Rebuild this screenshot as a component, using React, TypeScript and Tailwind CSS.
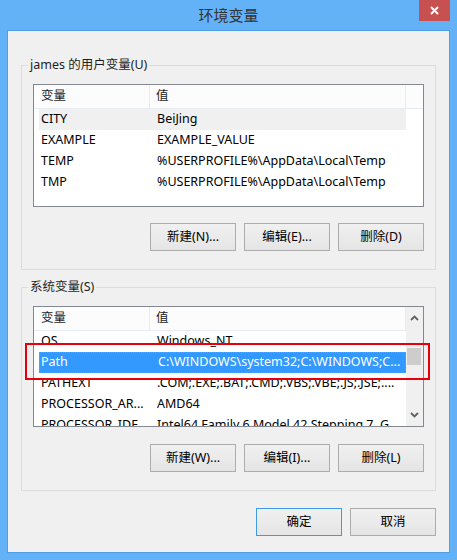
import React from 'react'

type Row = [string, string]

const USER_ROWS: Row[] = [
  ['CITY', 'BeiJing'],
  ['EXAMPLE', 'EXAMPLE_VALUE'],
  ['TEMP', '%USERPROFILE%\\AppData\\Local\\Temp'],
  ['TMP', '%USERPROFILE%\\AppData\\Local\\Temp'],
]

const SYS_ROWS: Row[] = [
  ['OS', 'Windows_NT'],
  ['Path', 'C:\\WINDOWS\\system32;C:\\WINDOWS;C...'],
  ['PATHEXT', '.COM;.EXE;.BAT;.CMD;.VBS;.VBE;.JS;.JSE;....'],
  ['PROCESSOR_AR...', 'AMD64'],
  ['PROCESSOR_IDE...', 'Intel64 Family 6 Model 42 Stepping 7, G...'],
]

function Button({ label, focused }: { label: string; focused?: boolean }) {
  return (
    <div
      className={`w-[86px] h-[28px] flex items-center justify-center border text-[12.5px] text-black bg-gradient-to-b from-[#f0f0f0] to-[#e5e5e5] ${
        focused ? 'border-[#3c9ae8]' : 'border-[#acacac]'
      }`}
    >
      {label}
    </div>
  )
}

function ListBox({
  rows,
  height,
  hoverRow,
  selectedRow,
  scroll,
}: {
  rows: Row[]
  height: string
  hoverRow?: number
  selectedRow?: number
  scroll?: boolean
}) {
  return (
    <div className={`${height} border border-[#828790] bg-white flex overflow-hidden`}>
      <div className="flex-1 flex flex-col min-w-0">
        {/* header */}
        <div className="h-[24px] flex shrink-0 border-b border-[#e5ecf3] bg-[#fcfcfc] text-[12.5px] text-[#1e1e1e]">
          <div className="w-[116px] pl-[7px] flex items-center border-r border-[#e5ecf3]">变量</div>
          <div className="w-[256px] pl-[6px] flex items-center border-r border-[#e5ecf3]">值</div>
          <div className="flex-1" />
        </div>
        {rows.map(([name, value], i) => {
          const sel = i === selectedRow
          const hov = i === hoverRow
          return (
            <div
              key={name}
              className={`ml-[5px] w-[367px] h-[21px] shrink-0 flex items-center text-[12.5px] ${
                sel
                  ? 'bg-[#3399ff] text-white border border-dotted border-[#d08a3a]'
                  : hov
                    ? 'bg-[#f0f0f0] text-[#000]'
                    : 'text-[#000]'
              }`}
            >
              <div className={`w-[111px] ${sel ? 'pl-[1px]' : 'pl-[2px]'} whitespace-nowrap overflow-hidden`}>{name}</div>
              <div className="flex-1 pl-[7px] whitespace-nowrap overflow-hidden">{value}</div>
            </div>
          )
        })}
      </div>
      {scroll && (
        <div className="w-[17px] bg-[#f0f0f0] flex flex-col items-center shrink-0">
          <div className="h-[20px] w-full flex items-center justify-center mt-[1px]">
            <svg width="9" height="6" viewBox="0 0 9 6">
              <path d="M1 5 L4.5 1.5 L8 5" fill="none" stroke="#606060" strokeWidth="1.8" />
            </svg>
          </div>
          <div className="mt-[20px] h-[17px] w-[14px] mr-[2px] bg-[#cdcdcd]" />
          <div className="flex-1" />
          <div className="h-[20px] w-full flex items-center justify-center mb-[1px]">
            <svg width="9" height="6" viewBox="0 0 9 6">
              <path d="M1 1 L4.5 4.5 L8 1" fill="none" stroke="#606060" strokeWidth="1.8" />
            </svg>
          </div>
        </div>
      )}
    </div>
  )
}

function Group({ title, children }: { title: string; children: React.ReactNode }) {
  return (
    <div className="relative border border-[#dcdcdc] flex flex-col px-[11px]">
      <span className="absolute -top-[10px] left-[6px] px-[2px] bg-[#f0f0f0] text-[12.5px] text-[#1e1e1e] leading-[18px]">
        {title}
      </span>
      {children}
    </div>
  )
}

export default function App() {
  return (
    <div className="w-[457px] h-[560px] bg-[#63b2f8] flex flex-col relative font-['Noto_Sans','Noto_Sans_CJK_SC',sans-serif]">
      {/* title bar */}
      <div className="h-[30px] relative flex items-center justify-center shrink-0">
        <span className="text-[15px] text-[#333] mt-[1px] font-['Noto_Sans_CJK_SC',sans-serif]">环境变量</span>
        <div className="absolute right-[7px] top-0 w-[31px] h-[21px] bg-[#c75050] flex items-center justify-center">
          <svg width="9" height="9" viewBox="0 0 9 9">
            <path d="M1 1 L8 8 M8 1 L1 8" stroke="#fff" strokeWidth="2" />
          </svg>
        </div>
      </div>

      {/* client area */}
      <div className="mx-[7px] mb-[7px] flex-1 border border-[#4f9ee8] bg-[#f0f0f0] flex flex-col px-[13px]">
        <div className="mt-[34px] h-[205px]">
          <Group title="james 的用户变量(U)">
            <div className="pt-[18px]">
              <ListBox rows={USER_ROWS} height="h-[123px]" hoverRow={0} />
            </div>
            <div className="mt-[16px] mb-[18px] flex justify-end gap-[8px]">
              <Button label="新建(N)..." />
              <Button label="编辑(E)..." />
              <Button label="删除(D)" />
            </div>
          </Group>
        </div>

        <div className="mt-[17px]">
          <Group title="系统变量(S)">
            <div className="pt-[18px]">
              <ListBox rows={SYS_ROWS} height="h-[121px]" selectedRow={1} scroll />
            </div>
            <div className="mt-[17px] mb-[18px] flex justify-end gap-[8px]">
              <Button label="新建(W)..." />
              <Button label="编辑(I)..." />
              <Button label="删除(L)" />
            </div>
          </Group>
        </div>

        <div className="mt-[17px] flex justify-end gap-[8px]">
          <Button label="确定" focused />
          <Button label="取消" />
        </div>
      </div>

      {/* red annotation box */}
      <div className="absolute left-[25px] top-[343px] w-[405px] h-[37px] border-2 border-solid border-red-600 pointer-events-none" />
    </div>
  )
}
